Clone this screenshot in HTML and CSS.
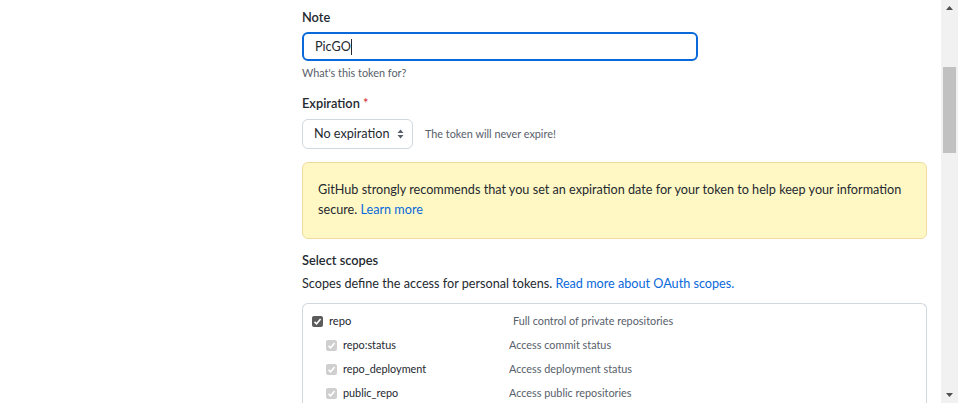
FILE: index.html
```html
<!DOCTYPE html>
<html>
<head>
<meta charset="utf-8">
<link rel="stylesheet" href="styles.css">
</head>
<body>
<div class="page">
  <main class="main">
    <form class="content">
      <div class="label label-note">Note</div>
      <div class="input focused"><span class="value">PicGO</span><span class="caret"></span></div>
      <p class="hint hint-note">What's this token for?</p>

      <div class="label label-exp">Expiration <span class="req">*</span></div>
      <div class="exp-row">
        <div class="select"><span>No expiration</span>
          <svg class="sel-arrows" width="7" height="10" viewBox="0 0 7 10"><path d="M3.5 0.5 L6.5 4 H0.5 Z M3.5 9.5 L6.5 6 H0.5 Z" fill="#57606a"/></svg>
        </div>
        <span class="hint">The token will never expire!</span>
      </div>

      <div class="flash">GitHub strongly recommends that you set an expiration date for your token to help keep your information secure. <a class="link" href="#">Learn more</a></div>

      <div class="label label-scopes">Select scopes</div>
      <p class="desc">Scopes define the access for personal tokens. <a class="link" href="#">Read more about OAuth scopes.</a></p>

      <div class="scopes">
        <div class="scope parent">
          <span class="cb checked"><svg width="9" height="9" viewBox="0 0 9 9"><path d="M1.5 4.8 L3.6 6.8 L7.6 2" fill="none" stroke="#fff" stroke-width="1.6"/></svg></span>
          <span class="name">repo</span>
          <span class="sdesc">Full control of private repositories</span>
        </div>
        <div class="scope child">
          <span class="cb disabled"><svg width="9" height="9" viewBox="0 0 9 9"><path d="M1.5 4.8 L3.6 6.8 L7.6 2" fill="none" stroke="#fff" stroke-width="1.6"/></svg></span>
          <span class="name">repo:status</span>
          <span class="sdesc">Access commit status</span>
        </div>
        <div class="scope child">
          <span class="cb disabled"><svg width="9" height="9" viewBox="0 0 9 9"><path d="M1.5 4.8 L3.6 6.8 L7.6 2" fill="none" stroke="#fff" stroke-width="1.6"/></svg></span>
          <span class="name">repo_deployment</span>
          <span class="sdesc">Access deployment status</span>
        </div>
        <div class="scope child">
          <span class="cb disabled"><svg width="9" height="9" viewBox="0 0 9 9"><path d="M1.5 4.8 L3.6 6.8 L7.6 2" fill="none" stroke="#fff" stroke-width="1.6"/></svg></span>
          <span class="name">public_repo</span>
          <span class="sdesc">Access public repositories</span>
        </div>
      </div>
    </form>
  </main>
  <div class="scrollbar">
    <svg class="sb-arrow" width="17" height="17" viewBox="0 0 17 17"><path d="M8.5 6 L12 10 H5 Z" fill="#505050"/></svg>
    <div class="sb-thumb"></div>
    <div class="sb-fill"></div>
    <svg class="sb-arrow" width="17" height="17" viewBox="0 0 17 17"><path d="M8.5 11 L12 7 H5 Z" fill="#505050"/></svg>
  </div>
</div>
</body>
</html>
```

FILE: styles.css
```css
* { box-sizing: border-box; }
html, body { margin: 0; padding: 0; background: #fff; }
body {
  font-family: Lato, "Liberation Sans", sans-serif;
  font-size: 12.65px;
  line-height: 20px;
  color: #24292f;
  overflow: hidden;
}
.page {
  display: flex;
  height: 403px;
}
.main {
  flex: 1;
  overflow: hidden;
}
.content {
  margin: 0 0 0 302px;
  width: 625px;
  display: flex;
  flex-direction: column;
  align-items: flex-start;
}
.label {
  font-weight: 600;
  font-size: 12.8px;
  line-height: 20px;
}
.label-note { margin-top: 7px; }
.label-exp { margin-top: 11px; }
.label-scopes { margin-top: 11px; }
.req { color: #cf222e; font-weight: 400; }
.input {
  margin-top: 5px;
  width: 396px;
  height: 29px;
  border: 2px solid #0969da;
  border-radius: 6px;
  padding: 0 11px;
  display: flex;
  align-items: center;
  font-size: 12.65px;
}
.caret {
  display: inline-block;
  width: 1px;
  height: 16px;
  background: #24292f;
}
.hint {
  font-size: 10.85px;
  line-height: 18px;
  color: #57606a;
  margin: 0;
}
.hint-note { margin-top: 3px; }
.exp-row {
  margin-top: 6px;
  display: flex;
  align-items: center;
  gap: 12px;
}
.select {
  width: 111px;
  height: 30px;
  border: 1px solid #d0d7de;
  border-radius: 6px;
  padding: 0 8px 0 11px;
  display: flex;
  align-items: center;
  justify-content: space-between;
  white-space: nowrap;
  font-size: 12.65px;
  color: #24292f;
}
.sel-arrows { flex: none; }
.flash {
  margin-top: 13px;
  width: 625px;
  height: 77px;
  background: #fff8c5;
  border: 1px solid #f0dc9c;
  border-radius: 6px;
  padding: 17px 15px;
  font-size: 12.65px;
  line-height: 20px;
}
.link { color: #0969da; text-decoration: none; }
.desc { margin: 4px 0 0; font-size: 12.65px; line-height: 20px; }
.scopes {
  margin-top: 9px;
  width: 625px;
  border: 1px solid #d0d7de;
  border-bottom: none;
  border-radius: 6px 6px 0 0;
  padding: 5px 8px 0;
  height: 110px;
}
.scope {
  height: 24px;
  display: flex;
  align-items: center;
  font-size: 10.85px;
}
.scope.child { padding-left: 14px; }
.cb {
  width: 11px;
  height: 11px;
  border-radius: 2px;
  display: flex;
  align-items: center;
  justify-content: center;
  flex: none;
  margin-left: 1px;
}
.cb.checked { background: #5b5b5b; }
.cb.disabled { background: #cfcfcf; }
.name { margin-left: 6px; color: #24292f; }
.parent .name { width: 184px; font-size: 11.2px; }
.child .name { width: 166px; }
.sdesc { color: #57606a; }
.scrollbar {
  width: 17px;
  flex: none;
  background: #f1f1f1;
  display: flex;
  flex-direction: column;
  align-items: center;
}
.sb-arrow { flex: none; display: block; }
.sb-thumb {
  margin-top: 50px;
  width: 13px;
  height: 86px;
  background: #c1c1c1;
  flex: none;
}
.sb-fill { flex: 1; }
```
